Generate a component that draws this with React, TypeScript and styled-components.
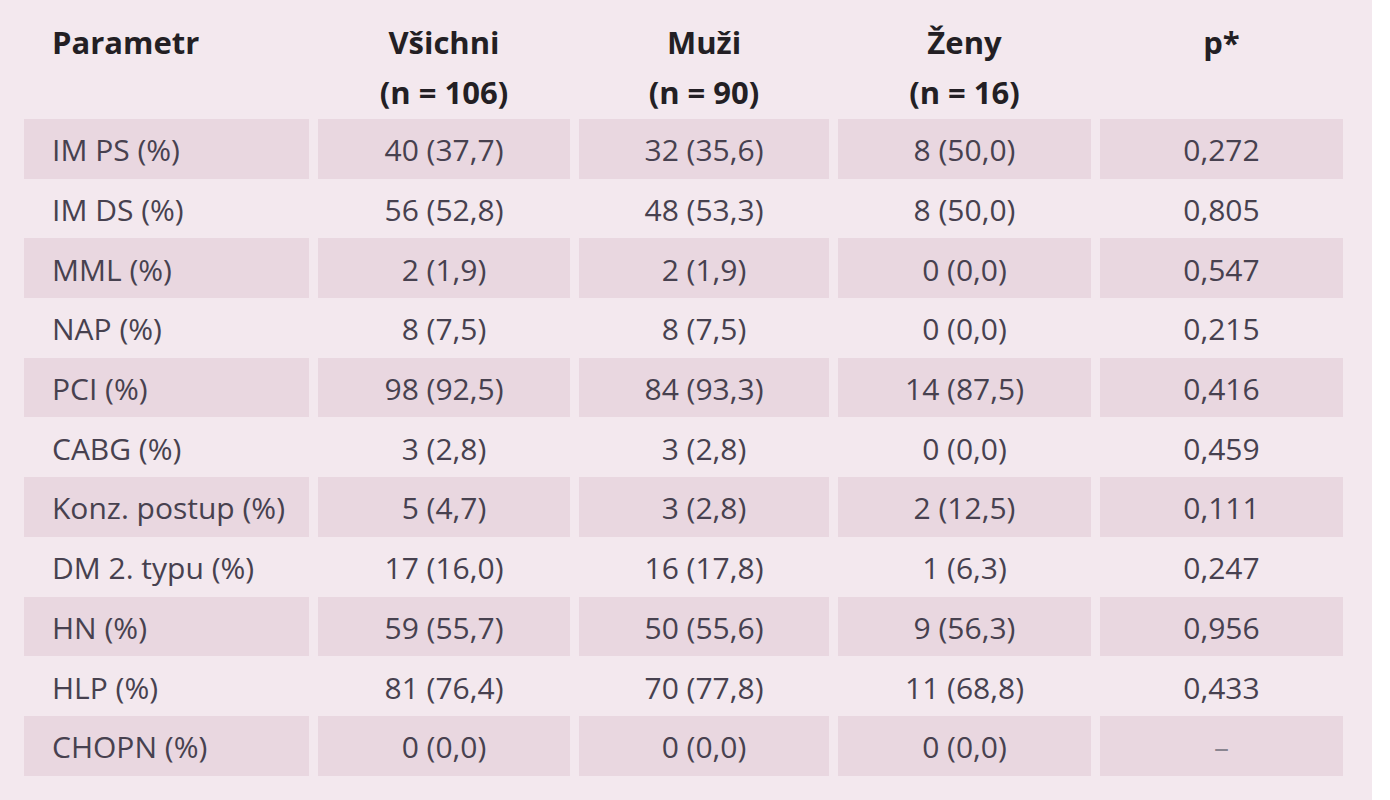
import React from "react";
import styled, { createGlobalStyle } from "styled-components";

const GlobalStyle = createGlobalStyle`
  html, body {
    margin: 0;
    padding: 0;
    background: #ffffff;
  }
  #root {
    width: 1390px;
    height: 800px;
  }
`;

const Panel = styled.div`
  width: 1372px;
  height: 800px;
  box-sizing: border-box;
  background: #f3e8ee;
  padding: 0 0 0 24px;
  font-family: "Open Sans", "Noto Sans", sans-serif;
`;

const Grid = styled.div`
  display: grid;
  grid-template-columns: 285px 252px 250px 253px 243px;
  column-gap: 9px;
  grid-auto-rows: 59.7px;
  grid-template-rows: 119px;
`;

const HeadCell = styled.div<{ $left?: boolean }>`
  box-sizing: border-box;
  padding-top: 17px;
  padding-left: ${(p) => (p.$left ? "28px" : "0")};
  text-align: ${(p) => (p.$left ? "left" : "center")};
  font-size: 31px;
  line-height: 50px;
  font-weight: 700;
  color: #231f24;
`;

const Cell = styled.div<{ $shade: boolean; $left?: boolean }>`
  display: flex;
  align-items: center;
  justify-content: ${(p) => (p.$left ? "flex-start" : "center")};
  padding-left: ${(p) => (p.$left ? "28px" : "0")};
  padding-top: 2px;
  box-sizing: border-box;
  background: ${(p) => (p.$shade ? "#e9d7e0" : "transparent")};
  font-size: 30px;
  font-weight: 400;
  color: #47414f;
  white-space: nowrap;
`;

const Dash = styled.span`
  color: #8a8590;
`;

const headers: { top: string; bottom?: string }[] = [
  { top: "Parametr" },
  { top: "Všichni", bottom: "(n = 106)" },
  { top: "Muži", bottom: "(n = 90)" },
  { top: "Ženy", bottom: "(n = 16)" },
  { top: "p*" },
];

const rows: string[][] = [
  ["IM PS (%)", "40 (37,7)", "32 (35,6)", "8 (50,0)", "0,272"],
  ["IM DS (%)", "56 (52,8)", "48 (53,3)", "8 (50,0)", "0,805"],
  ["MML (%)", "2 (1,9)", "2 (1,9)", "0 (0,0)", "0,547"],
  ["NAP (%)", "8 (7,5)", "8 (7,5)", "0 (0,0)", "0,215"],
  ["PCI (%)", "98 (92,5)", "84 (93,3)", "14 (87,5)", "0,416"],
  ["CABG (%)", "3 (2,8)", "3 (2,8)", "0 (0,0)", "0,459"],
  ["Konz. postup (%)", "5 (4,7)", "3 (2,8)", "2 (12,5)", "0,111"],
  ["DM 2. typu (%)", "17 (16,0)", "16 (17,8)", "1 (6,3)", "0,247"],
  ["HN (%)", "59 (55,7)", "50 (55,6)", "9 (56,3)", "0,956"],
  ["HLP (%)", "81 (76,4)", "70 (77,8)", "11 (68,8)", "0,433"],
  ["CHOPN (%)", "0 (0,0)", "0 (0,0)", "0 (0,0)", "–"],
];

export default function App() {
  return (
    <>
      <GlobalStyle />
      <Panel>
        <Grid>
          {headers.map((h, i) => (
            <HeadCell key={`h${i}`} $left={i === 0}>
              <div>{h.top}</div>
              {h.bottom && <div>{h.bottom}</div>}
            </HeadCell>
          ))}
          {rows.map((r, ri) =>
            r.map((v, ci) => (
              <Cell key={`${ri}-${ci}`} $shade={ri % 2 === 0} $left={ci === 0}>
                {v === "–" ? <Dash>{v}</Dash> : v}
              </Cell>
            ))
          )}
        </Grid>
      </Panel>
    </>
  );
}
